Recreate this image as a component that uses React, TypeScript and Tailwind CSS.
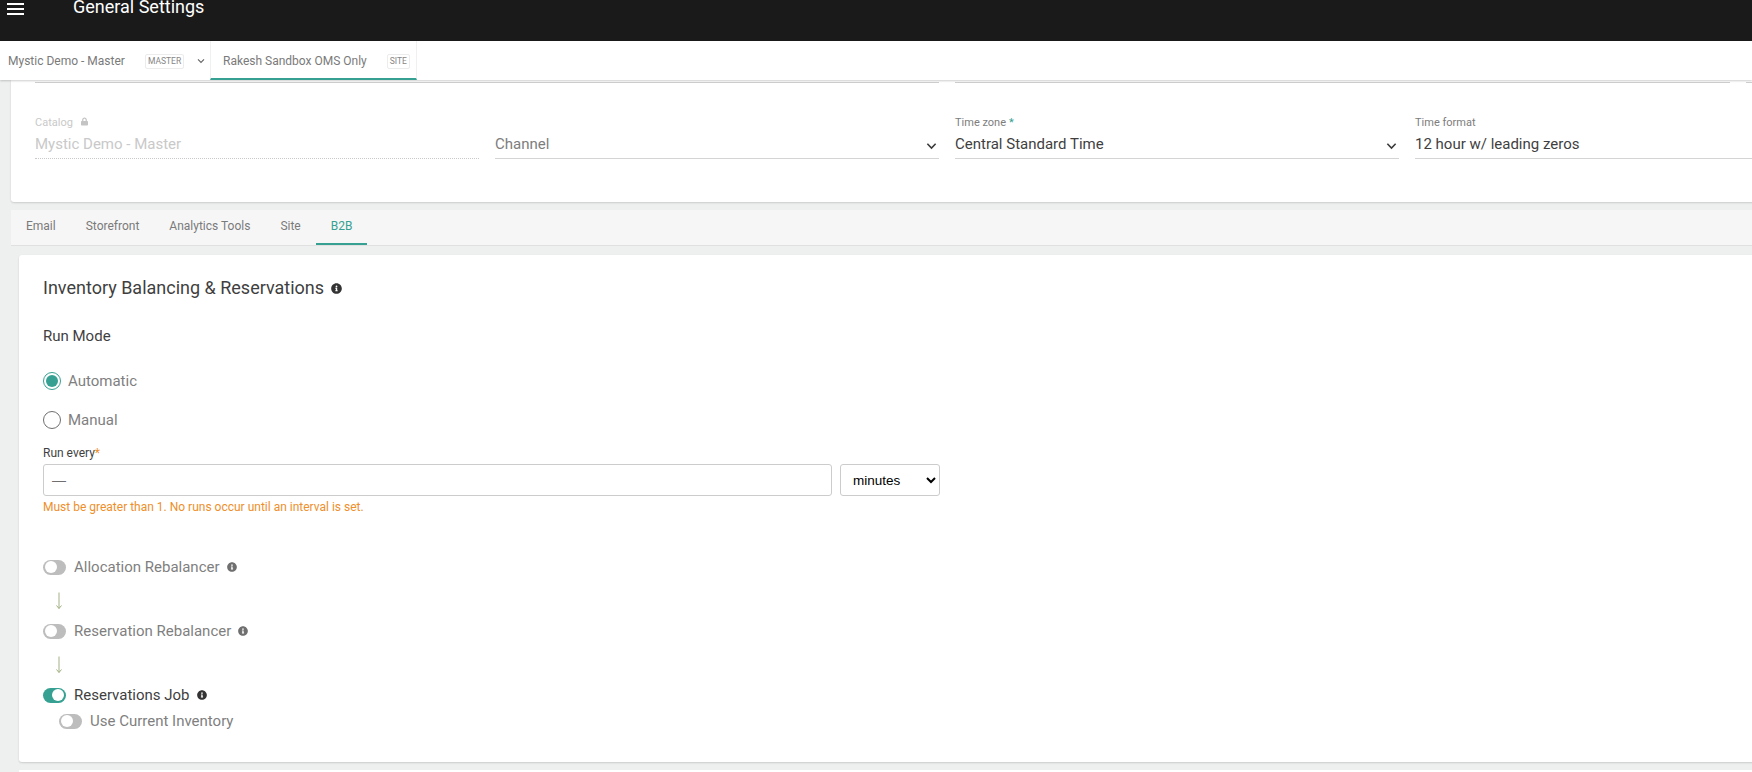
import React from "react";
import { FaInfoCircle, FaLock } from "react-icons/fa";

const Chevron = ({ className = "" }: { className?: string }) => (
  <svg viewBox="0 0 12 8" className={className} fill="none" stroke="currentColor" strokeWidth="1.7">
    <path d="M1.5 1.5 6 6.2l4.5-4.7" />
  </svg>
);

const Arrow = () => (
  <svg viewBox="0 0 10 18" className="w-[10px] h-[18px] ml-[11px] text-[#a3b184]" fill="none" stroke="currentColor" strokeWidth="1">
    <path d="M5 0.5v16M2.5 13.5 5 16.5l2.5-3" />
  </svg>
);

const Toggle = ({ on = false }: { on?: boolean }) => (
  <span className={`flex h-[15px] w-[23px] rounded-full items-center shrink-0 ${on ? "bg-[#36a192] justify-end pr-[2px]" : "bg-[#bdbdbd] pl-[2px]"}`}>
    <span className="block h-[12px] w-[12px] rounded-full bg-white" />
  </span>
);

const Field = ({ label, value, star, lock, disabled, chevron, muted }: { label?: string; value: string; star?: boolean; lock?: boolean; disabled?: boolean; chevron?: boolean; muted?: boolean }) => (
  <div className="w-[444px] shrink-0">
    <div className={`flex items-center h-[14px] text-[11px] ${disabled ? "text-[#c9c9c9]" : "text-[#7d7d7d]"}`}>
      {label}
      {star && <span className="ml-[3px] text-[#36a192]">*</span>}
      {lock && <FaLock className="ml-[8px] w-[7px] h-[9px] mb-[4px] text-[#c4c4c4]" />}
    </div>
    <div className={`flex items-center justify-between h-[28px] mt-[1px] text-[15px] border-b ${disabled ? "text-[#c9c9c9] border-dotted border-[#c9c9c9]" : "border-[#d4d4d4]"} ${muted ? "text-[#7d7d7d]" : disabled ? "" : "text-[#3f3f3f]"}`}>
      <span>{value}</span>
      {chevron && <Chevron className="w-[11px] h-[8px] mr-[2px] mt-[2px] text-[#3a3a3a]" />}
    </div>
  </div>
);

const Tab = ({ label, active }: { label: string; active?: boolean }) => (
  <div className={`px-[15px] pb-[2px] h-[35px] flex items-center text-[12px] border-b-2 ${active ? "text-[#36a192] border-[#36a192]" : "text-[#7a7a7a] border-transparent"}`}>
    {label}
  </div>
);

const Badge = ({ children }: { children: React.ReactNode }) => (
  <span className="flex items-center justify-center h-[15px] px-[2px] pt-[1px] rounded-[2px] border border-[#ececec] text-[8.5px] text-[#858585]">{children}</span>
);

const ToggleRow = ({ label, on, info }: { label: string; on?: boolean; info?: boolean }) => (
  <div className="flex items-center h-[20px]">
    <Toggle on={on} />
    <span className={`ml-[8px] text-[15px] ${on ? "text-[#3f3f3f]" : "text-[#7f7f7f]"}`}>{label}</span>
    {info && <FaInfoCircle className={`ml-[7px] w-[10px] h-[10px] ${on ? "text-[#333]" : "text-[#6f6f6f]"}`} />}
  </div>
);

export default function App() {
  return (
    <div className="w-[1752px] h-[772px] overflow-hidden bg-[#eef0ef] font-['Roboto',sans-serif]">
      <header className="h-[41px] bg-[#1a1a1a] flex items-start text-white">
        <div className="ml-[7px] mt-[3px] w-[17px] flex flex-col gap-[3px]">
          <span className="block h-[2px] bg-white" />
          <span className="block h-[2px] bg-white" />
          <span className="block h-[2px] bg-white" />
        </div>
        <div className="ml-[49px] -mt-[4px] text-[18px] leading-[22px] whitespace-nowrap">General Settings</div>
      </header>

      <nav className="h-[39px] bg-white flex items-stretch shadow-[0_1px_2px_rgba(0,0,0,0.2)] relative z-10">
        <div className="w-[210px] flex items-center pl-[8px] pt-[1px] text-[12px] text-[#7a7a7a] whitespace-nowrap">
          <span>Mystic Demo - Master</span>
          <span className="ml-[20px]"><Badge>MASTER</Badge></span>
          <Chevron className="ml-[13px] w-[8px] h-[6px] text-[#666]" />
        </div>
        <div className="w-[207px] flex items-center pl-[12px] pt-[3px] text-[12px] text-[#7a7a7a] whitespace-nowrap border-b-2 border-[#36a192] border-x border-x-[#f0f0f0]">
          <span>Rakesh Sandbox OMS Only</span>
          <span className="ml-[20px]"><Badge>SITE</Badge></span>
        </div>
      </nav>

      <section className="ml-[11px] w-[1860px] h-[122px] bg-white rounded-b-[3px] shadow-[0_1px_2px_rgba(0,0,0,0.15)] px-[24px]">
        <div className="flex gap-[16px] h-[3px]">
          <div className="w-[904px] border-b border-[#cfcfcf]" />
          <div className="w-[775px] border-b border-[#cfcfcf]" />
          <div className="w-[60px] border-b border-[#cfcfcf]" />
        </div>
        <div className="flex gap-[16px] pt-[33px]">
          <Field label="Catalog" value="Mystic Demo - Master" disabled lock />
          <Field value="Channel" chevron muted />
          <Field label="Time zone" value="Central Standard Time" star chevron />
          <Field label="Time format" value="12 hour w/ leading zeros" />
        </div>
      </section>

      <div className="ml-[11px] mt-[8px] w-[1860px] h-[36px] bg-[#f6f6f6] border-b border-[#e0e0e0] flex">
        <Tab label="Email" />
        <Tab label="Storefront" />
        <Tab label="Analytics Tools" />
        <Tab label="Site" />
        <Tab label="B2B" active />
      </div>

      <main className="ml-[19px] mt-[9px] w-[1860px] h-[507px] bg-white rounded-[3px] shadow-[0_1px_2px_rgba(0,0,0,0.15)] pl-[24px] pt-[21px]">
        <div className="flex items-center h-[22px] text-[18px] text-[#3f3f3f]">
          Inventory Balancing &amp; Reservations
          <FaInfoCircle className="ml-[7px] mt-[3px] w-[11px] h-[11px] text-[#333]" />
        </div>
        <div className="mt-[28px] h-[20px] leading-[20px] text-[15px] text-[#3f3f3f]">Run Mode</div>
        <div className="mt-[25px] flex items-center h-[20px] text-[15px] text-[#7f7f7f]">
          <span className="flex items-center justify-center w-[18px] h-[18px] rounded-full border border-[#36a192]">
            <span className="block w-[12px] h-[12px] rounded-full bg-[#36a192]" />
          </span>
          <span className="ml-[7px]">Automatic</span>
        </div>
        <div className="mt-[19px] flex items-center h-[20px] text-[15px] text-[#7f7f7f]">
          <span className="block w-[18px] h-[18px] rounded-full border border-[#6f6f6f]" />
          <span className="ml-[7px]">Manual</span>
        </div>
        <div className="mt-[16px] h-[14px] leading-[14px] text-[12px] text-[#3f3f3f]">
          Run every<span className="text-[#ee8f2b]">*</span>
        </div>
        <div className="mt-[4px] flex gap-[8px]">
          <div className="w-[789px] h-[32px] rounded-[3px] border border-[#cccccc] flex items-center pl-[8px] font-['Liberation_Sans',sans-serif] text-[14px] text-[#6f6f6f]">—</div>
          <select className="w-[100px] h-[32px] rounded-[3px] border border-[#cccccc] bg-white pl-[8px] font-['Liberation_Sans',sans-serif] text-[13.5px] text-black">
            <option>minutes</option>
          </select>
        </div>
        <div className="mt-[3px] h-[16px] leading-[16px] text-[12px] text-[#ee8f2b]">Must be greater than 1. No runs occur until an interval is set.</div>
        <div className="mt-[42px]"><ToggleRow label="Allocation Rebalancer" info /></div>
        <div className="mt-[15px]"><Arrow /></div>
        <div className="mt-[11px]"><ToggleRow label="Reservation Rebalancer" info /></div>
        <div className="mt-[15px]"><Arrow /></div>
        <div className="mt-[11px]"><ToggleRow label="Reservations Job" on info /></div>
        <div className="mt-[6px] ml-[16px]"><ToggleRow label="Use Current Inventory" /></div>
      </main>

      <div className="ml-[19px] mt-[8px] w-[1860px] h-[20px] bg-white" />
    </div>
  );
}
